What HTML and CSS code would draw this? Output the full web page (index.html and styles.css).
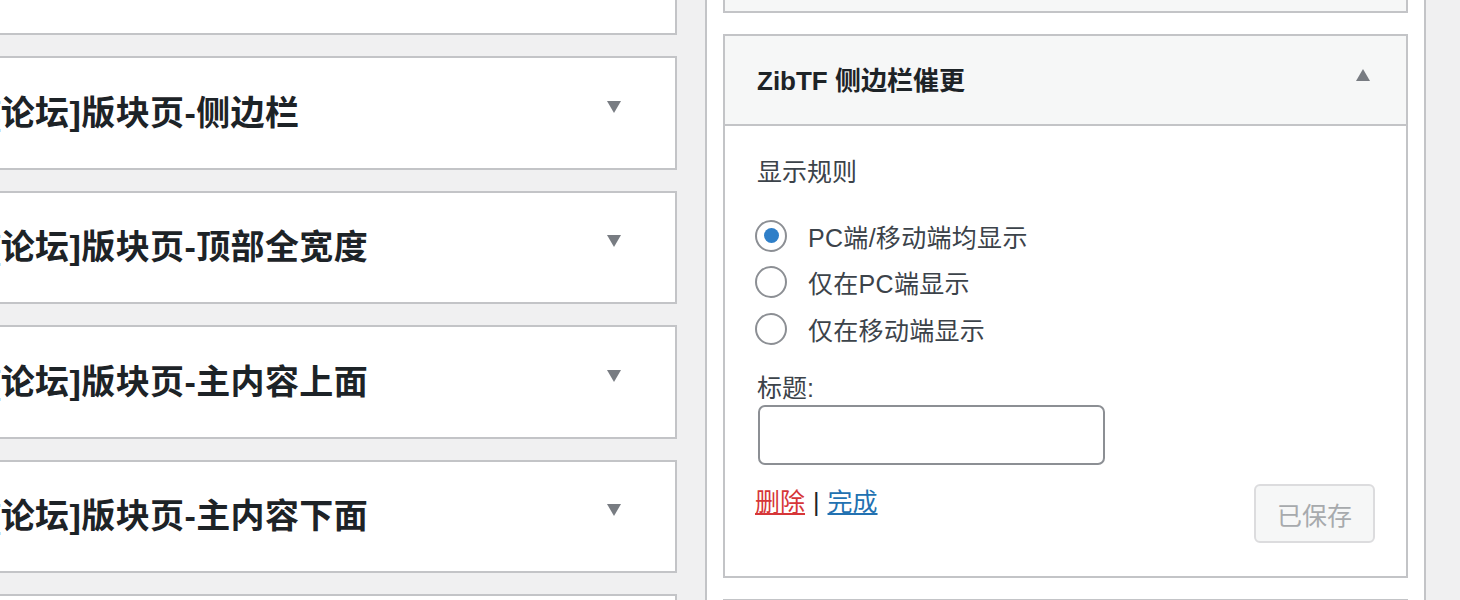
FILE: index.html
```html
<!DOCTYPE html>
<html lang="zh-CN">
<head>
<meta charset="utf-8">
<title>Widgets</title>
<link rel="stylesheet" href="styles.css">
</head>
<body>
<div class="page">
  <div class="areas">
    <div class="area"><h2 class="area-name">[论坛]版块页-顶部</h2><span class="toggle down"></span></div>
    <div class="area"><h2 class="area-name">[论坛]版块页-侧边栏</h2><span class="toggle down"></span></div>
    <div class="area"><h2 class="area-name">[论坛]版块页-顶部全宽度</h2><span class="toggle down"></span></div>
    <div class="area"><h2 class="area-name">[论坛]版块页-主内容上面</h2><span class="toggle down"></span></div>
    <div class="area"><h2 class="area-name">[论坛]版块页-主内容下面</h2><span class="toggle down"></span></div>
    <div class="area"><h2 class="area-name">[论坛]版块页-底部</h2><span class="toggle down"></span></div>
  </div>
  <div class="sidebar">
    <div class="widget collapsed"><div class="widget-top"></div></div>
    <div class="widget open">
      <div class="widget-top">
        <h3 class="widget-title">ZibTF 侧边栏催更</h3>
        <span class="toggle up"></span>
      </div>
      <div class="widget-inside">
        <p class="field-title">显示规则</p>
        <div class="radios">
          <label class="radio-row"><span class="radio checked"></span><span>PC端/移动端均显示</span></label>
          <label class="radio-row"><span class="radio"></span><span>仅在PC端显示</span></label>
          <label class="radio-row"><span class="radio"></span><span>仅在移动端显示</span></label>
        </div>
        <div class="field-label">标题:</div>
        <div class="text-input"></div>
        <div class="actions">
          <div class="links"><a class="delete">删除</a><span class="sep">|</span><a class="done">完成</a></div>
          <div class="save-btn">已保存</div>
        </div>
      </div>
    </div>
    <div class="widget collapsed"><div class="widget-top"></div></div>
  </div>
</div>
</body>
</html>
```

FILE: styles.css
```css
html, body {
  margin: 0;
  padding: 0;
}
body {
  background: #f0f0f1;
  width: 1460px;
  height: 600px;
  overflow: hidden;
  font-family: "Liberation Sans", "Noto Sans CJK SC", sans-serif;
  color: #3c434a;
}
.page {
  display: flex;
  align-items: flex-start;
}
.areas {
  width: 717px;
  margin-left: -40px;
  margin-top: -78.5px;
  display: flex;
  flex-direction: column;
  gap: 21px;
  flex-shrink: 0;
}
.area {
  box-sizing: border-box;
  height: 113.5px;
  background: #fff;
  border: 2px solid #c3c4c7;
  display: flex;
  align-items: center;
  justify-content: space-between;
  padding: 0 54px 0 27px;
}
.area-name {
  margin: 0;
  font-size: 34px;
  font-weight: 700;
  color: #1d2327;
  line-height: 40px;
  letter-spacing: 0.4px;
  white-space: nowrap;
}
.toggle {
  width: 0;
  height: 0;
  border-left: 7px solid transparent;
  border-right: 7px solid transparent;
}
.toggle.down {
  border-top: 12px solid #787c82;
  margin-top: -12px;
}
.toggle.up {
  border-bottom: 12px solid #787c82;
  margin-top: -6px;
}
.sidebar {
  box-sizing: border-box;
  margin-left: 28px;
  width: 721px;
  height: 640px;
  background: #fff;
  border-left: 2px solid #c3c4c7;
  border-right: 2px solid #c3c4c7;
  padding: 0 16px;
  flex-shrink: 0;
  display: flex;
  flex-direction: column;
  gap: 21px;
}
.widget {
  border: 2px solid #c3c4c7;
  background: #fff;
}
.widget.collapsed .widget-top {
  height: 88px;
  background: #f6f7f7;
  border-bottom: 0;
}
.widget.collapsed:first-child {
  margin-top: -79px;
}
.widget-top {
  box-sizing: border-box;
  height: 90px;
  background: #f6f7f7;
  border-bottom: 2px solid #c3c4c7;
  display: flex;
  align-items: center;
  justify-content: space-between;
  padding: 0 36px 4px 32px;
}
.widget-title {
  margin: 0;
  font-size: 26px;
  font-weight: 700;
  color: #1d2327;
}
.widget-inside {
  box-sizing: border-box;
  height: 450px;
  padding: 28px 30px 0 32px;
}
.field-title {
  margin: 0;
  font-size: 25px;
  line-height: 36px;
}
.radios {
  margin-top: 22.5px;
  display: flex;
  flex-direction: column;
}
.radio-row {
  display: flex;
  align-items: center;
  height: 46.5px;
  font-size: 25px;
  letter-spacing: 0.3px;
}
.radio {
  box-sizing: border-box;
  width: 32px;
  height: 32px;
  border: 2px solid #8c8f94;
  border-radius: 50%;
  margin-right: 21px;
  margin-left: -2px;
  display: flex;
  align-items: center;
  justify-content: center;
}
.radio.checked::after {
  content: "";
  width: 15px;
  height: 15px;
  border-radius: 50%;
  background: #2f7fc8;
}
.field-label {
  margin-top: 19px;
  font-size: 25px;
  line-height: 34px;
}
.text-input {
  box-sizing: border-box;
  width: 347px;
  height: 60px;
  border: 2px solid #8c8f94;
  border-radius: 7px;
  margin-left: 1px;
}
.actions {
  display: flex;
  justify-content: space-between;
  align-items: flex-start;
  margin-top: 19px;
}
.links {
  font-size: 25px;
  line-height: 36px;
  margin-left: -2px;
}
.delete {
  color: #d63638;
  text-decoration: underline;
}
.done {
  color: #2271b1;
  text-decoration: underline;
}
.sep {
  color: #1d2327;
  margin: 0 8px;
}
.save-btn {
  box-sizing: border-box;
  width: 121px;
  height: 59px;
  border: 2px solid #dcdcde;
  border-radius: 6px;
  background: #f6f7f7;
  color: #a7aaad;
  font-size: 25px;
  display: flex;
  align-items: center;
  justify-content: center;
  margin-right: 1px;
}
```
